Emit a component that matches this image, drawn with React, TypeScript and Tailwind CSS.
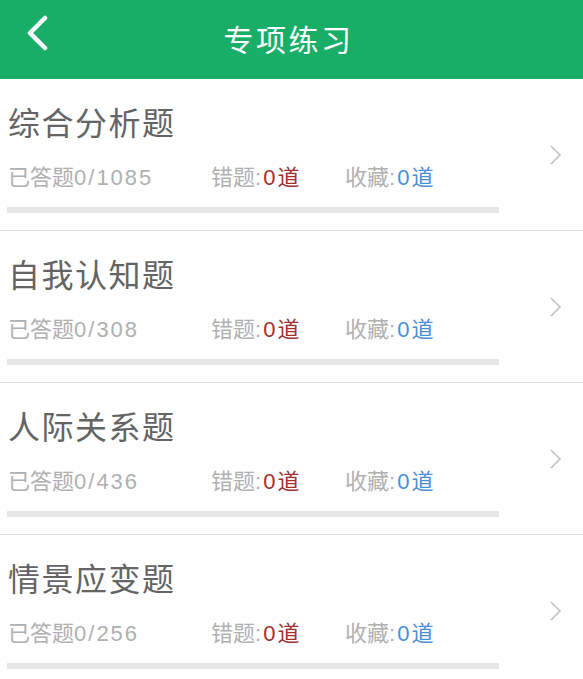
import React from "react";

const rows = [
  { title: "综合分析题", total: 1085 },
  { title: "自我认知题", total: 308 },
  { title: "人际关系题", total: 436 },
  { title: "情景应变题", total: 256 },
];

const font = { fontFamily: '"Noto Sans CJK SC", "Noto Sans", sans-serif' };

function Num({ children }: { children: React.ReactNode }) {
  return (
    <span className="tracking-[2px]" style={{ fontFamily: '"Liberation Sans", Arial, sans-serif' }}>
      {children}
    </span>
  );
}

export default function App() {
  return (
    <div className="w-[583px] h-[679px] overflow-hidden bg-white" style={font}>
      <div className="relative h-[79px] bg-[#19ae67] flex items-center justify-center">
        <svg
          className="absolute left-[25px] top-[15px]"
          width="24"
          height="36"
          viewBox="0 0 24 36"
          fill="none"
        >
          <path d="M20 3 L5 18 L20 33" stroke="white" strokeWidth="4.5" strokeLinecap="round" strokeLinejoin="round" />
        </svg>
        <span className="text-white text-[30px] leading-none tracking-[2.5px] mt-[-4px] ml-[-6px]">专项练习</span>
      </div>
      {rows.map((r) => (
        <div key={r.title} className="flex items-center h-[152px] border-b border-[#dedede]">
          <div className="flex-1 pl-[7px] pt-[22px] pb-[17px] flex flex-col">
            <div className="h-[40px] leading-[40px] text-[32px] tracking-[1.5px] text-[#646464] pl-[1px]">{r.title}</div>
            <div className="mt-[19px] h-[30px] leading-[30px] text-[22px] flex text-[#b0b0b0] pl-[1px]">
              <span className="w-[203px]">
                已答题<Num>0/{r.total}</Num>
              </span>
              <span className="w-[134px]">
                错题<Num>:</Num>
                <span className="text-[#a52f2f]">
                  <Num>0</Num>道
                </span>
              </span>
              <span>
                收藏<Num>:</Num>
                <span className="text-[#4b8ed8]">
                  <Num>0</Num>道
                </span>
              </span>
            </div>
            <div className="mt-[17px] h-[6px] w-[492px] bg-[#e6e6e6]" />
          </div>
          <svg className="mr-[21px]" width="13" height="22" viewBox="0 0 13 22" fill="none">
            <path d="M2 2 L11 11 L2 20" stroke="#c2c2c2" strokeWidth="1.6" />
          </svg>
        </div>
      ))}
    </div>
  );
}
